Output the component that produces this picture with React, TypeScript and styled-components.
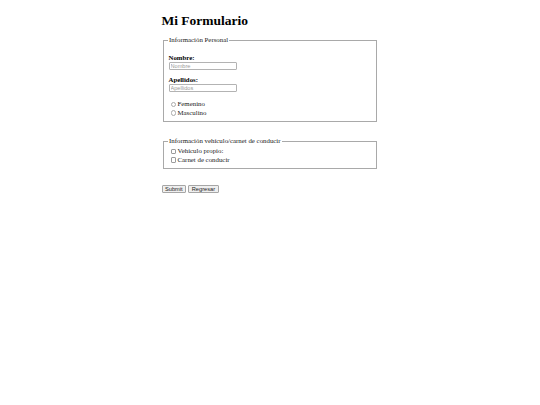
import styled, { createGlobalStyle } from "styled-components";

const GlobalStyle = createGlobalStyle`
  html, body {
    margin: 0;
    padding: 0;
    background: #ffffff;
  }
  body {
    font-family: "Liberation Serif", "Times New Roman", serif;
    color: #000;
  }
`;

const Page = styled.div`
  width: 216px;
  margin: 0 auto;
  padding: 13px 0 0 0;
  position: relative;
  left: -0.5px;
`;

const Title = styled.h1`
  font-size: 13.5px;
  line-height: 15px;
  font-weight: bold;
  margin: 0 0 8px 0;
`;

const Form = styled.form`
  display: flex;
  flex-direction: column;
`;

const Fieldset = styled.fieldset<{ $gapBottom?: number }>`
  margin: 0 1px ${(p) => p.$gapBottom ?? 0}px 1px;
  padding: 0 5px 4px 5px;
  border: 1px solid #a9a9a9;
  min-width: 0;
`;

const Legend = styled.legend`
  font-size: 6.85px;
  line-height: 8px;
  padding: 0 1px;
  margin-left: -0.5px;
  color: #1a1a1a;
`;

const Field = styled.div<{ $top: number }>`
  display: flex;
  flex-direction: column;
  align-items: flex-start;
  margin-top: ${(p) => p.$top}px;
`;

const Label = styled.label`
  font-size: 6.8px;
  line-height: 8px;
  font-weight: bold;
`;

const TextInput = styled.input`
  box-sizing: border-box;
  width: 68px;
  height: 8px;
  padding: 0 1px;
  margin: 0;
  border: 1px solid #b3b3b3;
  border-radius: 1px;
  font-family: "Liberation Sans", Arial, sans-serif;
  font-size: 5.6px;
  line-height: 6px;
  outline: none;

  &::placeholder {
    color: #9a9a9a;
  }
`;

const OptionList = styled.div<{ $top: number }>`
  display: flex;
  flex-direction: column;
  margin-top: ${(p) => p.$top}px;
`;

const Option = styled.label`
  display: flex;
  align-items: center;
  height: 8.5px;
  font-size: 6.85px;
  line-height: 8px;
  color: #1a1a1a;
`;

const Radio = styled.span`
  box-sizing: border-box;
  width: 5.5px;
  height: 5.5px;
  margin: 0 1.5px 0 2px;
  border: 1px solid #ababab;
  border-radius: 50%;
  background: #fff;
`;

const Check = styled.span`
  box-sizing: border-box;
  width: 5.5px;
  height: 5.5px;
  margin: 0 1.5px 0 2px;
  border: 1px solid #9c9c9c;
  border-radius: 1px;
  background: #fff;
`;

const Actions = styled.div`
  display: flex;
  gap: 2px;
  margin-top: 16px;
`;

const Button = styled.button`
  box-sizing: border-box;
  height: 8px;
  padding: 0 2.5px;
  margin: 0;
  border: 1px solid #a6a6a6;
  border-radius: 1px;
  background: #efefef;
  font-family: "Liberation Sans", Arial, sans-serif;
  font-size: 5.7px;
  line-height: 6px;
  color: #222;
`;

export default function App() {
  return (
    <>
      <GlobalStyle />
      <Page>
        <Title>Mi Formulario</Title>
        <Form onSubmit={(e) => e.preventDefault()}>
          <Fieldset $gapBottom={15}>
            <Legend>Información Personal</Legend>
            <Field $top={10}>
              <Label htmlFor="nombre">Nombre:</Label>
              <TextInput id="nombre" type="text" placeholder="Nombre" />
            </Field>
            <Field $top={6}>
              <Label htmlFor="apellidos">Apellidos:</Label>
              <TextInput id="apellidos" type="text" placeholder="Apellidos" />
            </Field>
            <OptionList $top={8}>
              <Option>
                <Radio />
                Femenino
              </Option>
              <Option>
                <Radio />
                Masculino
              </Option>
            </OptionList>
          </Fieldset>
          <Fieldset>
            <Legend>Información vehículo/carnet de conducir</Legend>
            <OptionList $top={2}>
              <Option>
                <Check />
                Vehículo propio:
              </Option>
              <Option>
                <Check />
                Carnet de conducir
              </Option>
            </OptionList>
          </Fieldset>
          <Actions>
            <Button type="submit">Submit</Button>
            <Button type="button">Regresar</Button>
          </Actions>
        </Form>
      </Page>
    </>
  );
}
